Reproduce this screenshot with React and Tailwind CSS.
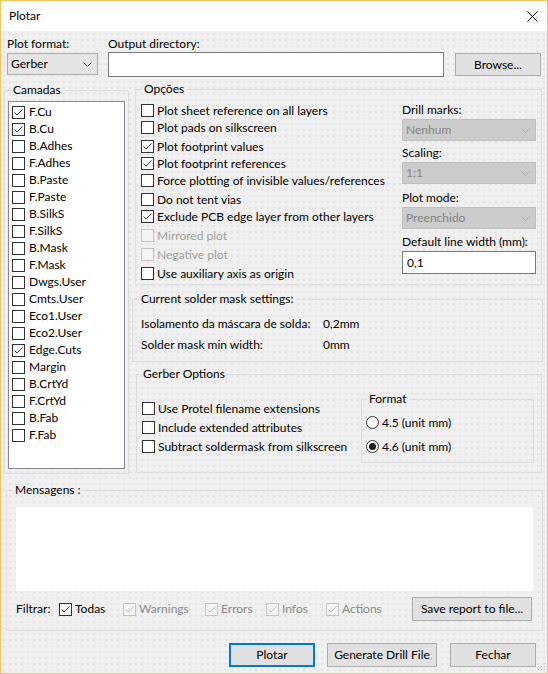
import React from "react";

const Check = ({ checked, disabled }) => (
  <span
    className={`flex h-[13px] w-[13px] shrink-0 items-center justify-center border ${
      disabled ? "border-[#c4c4c4] bg-[#f4f4f4]" : "border-[#333333] bg-white"
    }`}
  >
    {checked && (
      <svg width="11" height="11" viewBox="0 0 11 11">
        <path
          d="M1.5 5.5 L4 8 L9.5 2.5"
          fill="none"
          stroke={disabled ? "#c4c4c4" : "#404040"}
          strokeWidth="1"
        />
      </svg>
    )}
  </span>
);

const CheckRow = ({ label, checked, disabled, className = "" }) => (
  <div className={`flex h-[17px] items-center gap-[3px] ${className}`}>
    <Check checked={checked} disabled={disabled} />
    <span className={disabled ? "text-[#a0a0a0]" : "text-black"}>{label}</span>
  </div>
);

const Radio = ({ label, checked, className = "" }) => (
  <div className={`flex h-[17px] items-center gap-[3px] ${className}`}>
    <span className="flex h-[13px] w-[13px] items-center justify-center rounded-full border border-[#333333] bg-white">
      {checked && <span className="h-[7px] w-[7px] rounded-full bg-[#1a1a1a]" />}
    </span>
    <span>{label}</span>
  </div>
);

const Chevron = ({ color }) => (
  <svg width="9" height="5" viewBox="0 0 9 5">
    <path d="M0.5 0.5 L4.5 4.5 L8.5 0.5" fill="none" stroke={color} strokeWidth="1" />
  </svg>
);

const Select = ({ value, disabled, className = "" }) => (
  <div
    className={`flex items-center justify-between border pl-[3px] pr-[5px] ${
      disabled
        ? "border-[#bfbfbf] bg-[#cccccc] text-[#838383]"
        : "border-[#acacac] bg-[#e5e5e5] text-black"
    } ${className}`}
  >
    <span>{value}</span>
    <Chevron color={disabled ? "#adadad" : "#5a5a5a"} />
  </div>
);

const Button = ({ children, className = "" }) => (
  <div
    className={`flex items-center justify-center border border-[#adadad] bg-[#e1e1e1] ${className}`}
  >
    {children}
  </div>
);

const layers = [
  ["F.Cu", true],
  ["B.Cu", true],
  ["B.Adhes", false],
  ["F.Adhes", false],
  ["B.Paste", false],
  ["F.Paste", false],
  ["B.SilkS", false],
  ["F.SilkS", false],
  ["B.Mask", false],
  ["F.Mask", false],
  ["Dwgs.User", false],
  ["Cmts.User", false],
  ["Eco1.User", false],
  ["Eco2.User", false],
  ["Edge.Cuts", true],
  ["Margin", false],
  ["B.CrtYd", false],
  ["F.CrtYd", false],
  ["B.Fab", false],
  ["F.Fab", false],
];

export default function App() {
  return (
    <div className="flex h-[674px] w-[548px] flex-col whitespace-nowrap border border-[#f0c75e] font-['Lato',sans-serif] text-[12px] leading-[16px] text-black">
      {/* Title bar */}
      <div className="flex h-[30px] shrink-0 items-center justify-between bg-white pl-[8px] pr-[9px]">
        <span className="text-[12px]">Plotar</span>
        <svg width="11" height="11" viewBox="0 0 11 11">
          <path d="M0.5 0.5 L10.5 10.5 M10.5 0.5 L0.5 10.5" stroke="#000" strokeWidth="1" />
        </svg>
      </div>

      {/* Body */}
      <div className="relative flex flex-1 flex-col bg-[#f0f0f0] bg-[radial-gradient(#d6d6d6_0.6px,transparent_0.8px)] bg-[length:6px_6px]">
        {/* Row 1 */}
        <div className="flex items-start pt-[5px]">
          <div className="ml-[6px] flex w-[91px] flex-col">
            <span>Plot format:</span>
            <Select value="Gerber" className="mt-[1px] h-[22px]" />
          </div>
          <div className="ml-[10px] flex w-[336px] flex-col">
            <span>Output directory:</span>
            <div className="h-[25px] border border-[#7a7a7a] bg-white" />
          </div>
          <Button className="ml-[11px] mt-[17px] h-[23px] w-[86px]">Browse...</Button>
        </div>

        {/* Main */}
        <div className="mt-[4px] flex items-start">
          {/* Camadas */}
          <fieldset className="ml-[3px] mt-[1px] flex h-[392px] w-[125px] flex-col border border-[#dcdcdc]">
            <legend className="ml-[6px] px-[2px]">Camadas</legend>
            <div className="mx-[3px] mt-[3px] h-[368px] border border-[#828790] bg-white pl-[3px] pt-[1.5px]">
              {layers.map(([name, checked]) => (
                <div key={name} className="flex h-[17px] items-center gap-[4px]">
                  <Check checked={checked} />
                  <span>{name}</span>
                </div>
              ))}
            </div>
          </fieldset>

          {/* Right column */}
          <div className="ml-[6px] flex w-[407px] flex-col">
            {/* Opções */}
            <fieldset className="flex h-[204px] border border-[#dcdcdc]">
              <legend className="ml-[6px] px-[2px]">Opções</legend>
              <div className="flex flex-1 items-start">
                <div className="flex flex-1 flex-col pl-[5px] pt-[5px]">
                  <CheckRow label="Plot sheet reference on all layers" />
                  <CheckRow label="Plot pads on silkscreen" />
                  <CheckRow label="Plot footprint values" checked className="mt-[2px]" />
                  <CheckRow label="Plot footprint references" checked />
                  <CheckRow label="Force plotting of invisible values/references" />
                  <CheckRow label="Do not tent vias" className="mt-[2px]" />
                  <CheckRow label="Exclude PCB edge layer from other layers" checked />
                  <CheckRow label="Mirrored plot" disabled className="mt-[2px]" />
                  <CheckRow label="Negative plot" disabled className="mt-[2px]" />
                  <CheckRow label="Use auxiliary axis as origin" className="mt-[2px]" />
                </div>
                <div className="mr-[5px] flex w-[134px] flex-col pt-[5px]">
                  <span>Drill marks:</span>
                  <Select value="Nenhum" disabled className="mt-[1px] h-[22px]" />
                  <span className="mt-[4px]">Scaling:</span>
                  <Select value="1:1" disabled className="mt-[1px] h-[22px]" />
                  <span className="mt-[6px]">Plot mode:</span>
                  <Select value="Preenchido" disabled className="mt-[1px] h-[22px]" />
                  <span className="mt-[5px]">Default line width (mm):</span>
                  <div className="mt-[1px] flex h-[23px] items-center border border-[#7a7a7a] bg-white pl-[4px]">
                    0,1
                  </div>
                </div>
              </div>
            </fieldset>

            {/* Solder mask */}
            <fieldset className="-ml-[3px] mt-[6px] flex h-[71px] w-[411px] flex-col border border-[#dcdcdc]">
              <legend className="ml-[6px] px-[2px]">Current solder mask settings:</legend>
              <div className="flex flex-col pl-[8px] pt-[9px]">
                <div className="flex h-[16px]">
                  <span className="w-[182px]">Isolamento da máscara de solda:</span>
                  <span>0,2mm</span>
                </div>
                <div className="mt-[5px] flex h-[16px]">
                  <span className="w-[182px]">Solder mask min width:</span>
                  <span>0mm</span>
                </div>
              </div>
            </fieldset>

            {/* Gerber options */}
            <fieldset className="ml-[1px] mt-[4px] flex h-[107px] w-[406px] border border-[#dcdcdc]">
              <legend className="ml-[4px] px-[2px]">Gerber Options</legend>
              <div className="flex flex-1 items-start">
                <div className="mt-[18px] flex flex-1 flex-col pl-[5px]">
                  <CheckRow label="Use Protel filename extensions" />
                  <CheckRow label="Include extended attributes" className="mt-[2px]" />
                  <CheckRow label="Subtract soldermask from silkscreen" className="mt-[2px]" />
                </div>
                <fieldset className="mr-[7px] mt-[9px] flex h-[72px] w-[173px] shrink-0 flex-col border border-[#dcdcdc]">
                  <legend className="ml-[5px] px-[2px]">Format</legend>
                  <div className="flex flex-col pl-[4px] pt-[7px]">
                    <Radio label="4.5 (unit mm)" />
                    <Radio label="4.6 (unit mm)" checked className="mt-[7px]" />
                  </div>
                </fieldset>
              </div>
            </fieldset>
          </div>
        </div>

        {/* Mensagens */}
        <fieldset className="ml-[5px] mt-[8px] flex h-[149px] w-[537px] flex-col border border-[#dcdcdc]">
          <legend className="ml-[6px] px-[2px]">Mensagens :</legend>
          <div className="ml-[9px] mt-[9px] h-[84px] w-[517px] bg-white" />
          <div className="ml-[9px] mr-[10px] mt-[6px] flex h-[24px] items-center">
            <span className="w-[43px]">Filtrar:</span>
            <div className="flex w-[64px] items-center gap-[3px]">
              <Check checked />
              <span>Todas</span>
            </div>
            <div className="flex w-[82px] items-center gap-[3px]">
              <Check checked disabled />
              <span className="text-[#8a8a8a]">Warnings</span>
            </div>
            <div className="flex w-[61px] items-center gap-[3px]">
              <Check checked disabled />
              <span className="text-[#8a8a8a]">Errors</span>
            </div>
            <div className="flex w-[60px] items-center gap-[3px]">
              <Check checked disabled />
              <span className="text-[#8a8a8a]">Infos</span>
            </div>
            <div className="flex items-center gap-[3px]">
              <Check checked disabled />
              <span className="text-[#8a8a8a]">Actions</span>
            </div>
            <Button className="ml-auto h-[24px] w-[120px]">Save report to file...</Button>
          </div>
        </fieldset>

        {/* Bottom buttons */}
        <div className="mt-[12px] flex justify-end pr-[11px]">
          <div className="flex h-[24px] w-[86px] items-center justify-center border-2 border-[#0078d7] bg-[#e1e1e1]">
            Plotar
          </div>
          <Button className="ml-[12px] h-[24px] w-[110px]">Generate Drill File</Button>
          <Button className="ml-[13px] h-[24px] w-[86px]">Fechar</Button>
        </div>

        {/* Size grip */}
        <svg className="absolute bottom-[2px] right-[1px]" width="8" height="8" viewBox="0 0 8 8">
          <rect x="6" y="0" width="1" height="1" fill="#b8b8b8" />
          <rect x="3" y="3" width="1" height="1" fill="#b8b8b8" />
          <rect x="6" y="3" width="1" height="1" fill="#b8b8b8" />
          <rect x="0" y="6" width="1" height="1" fill="#b8b8b8" />
          <rect x="3" y="6" width="1" height="1" fill="#b8b8b8" />
          <rect x="6" y="6" width="1" height="1" fill="#b8b8b8" />
        </svg>
      </div>
    </div>
  );
}
